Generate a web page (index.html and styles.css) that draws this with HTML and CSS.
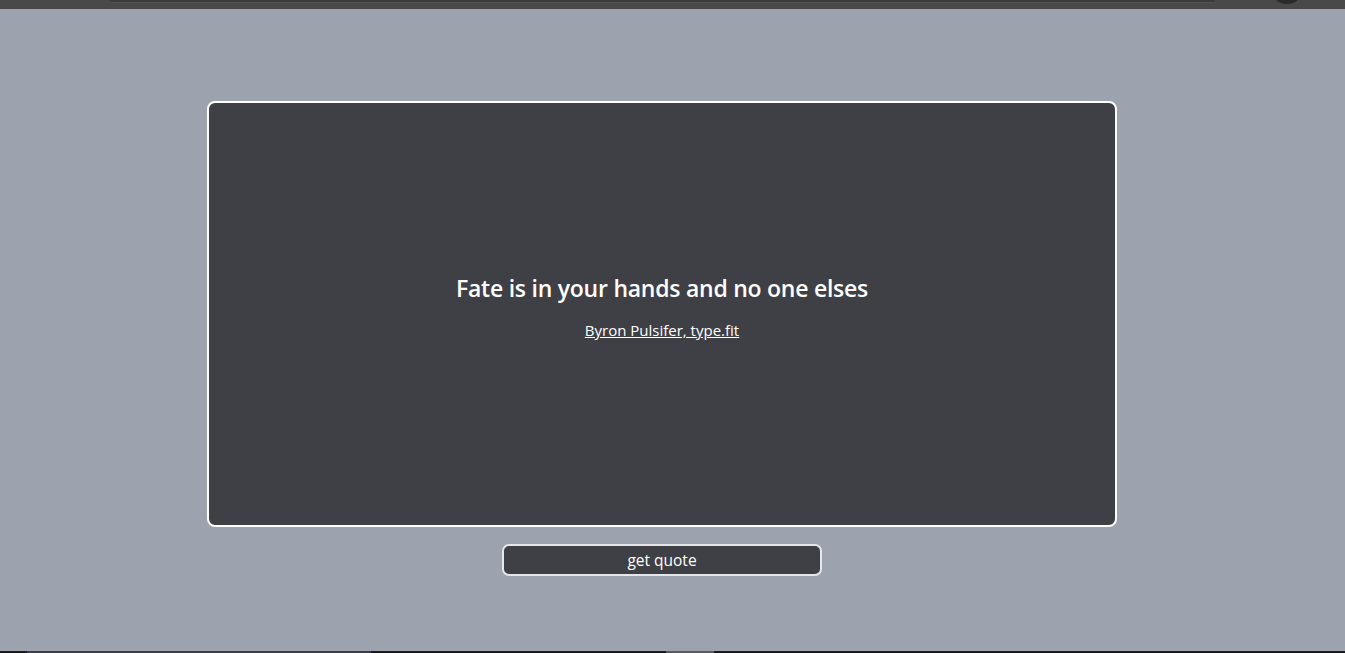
FILE: index.html
```html
<!DOCTYPE html>
<html>
<head>
<meta charset="utf-8">
<link rel="stylesheet" href="styles.css">
</head>
<body>
<div class="chrome-top">
  <div class="chrome-bar"></div>
  <div class="chrome-dot"></div>
</div>
<main class="page">
  <section class="card">
    <h1 class="quote">Fate is in your hands and no one elses</h1>
    <a class="author" href="#">Byron Pulsifer, type.fit</a>
  </section>
  <button class="get-btn">get quote</button>
</main>
<div class="chrome-bottom">
  <div class="seg seg-a"></div>
  <div class="seg seg-b"></div>
</div>
</body>
</html>
```

FILE: styles.css
```css
* { box-sizing: border-box; }
html, body { margin: 0; padding: 0; }
body {
  background: #9ca3af;
  height: 653px;
  overflow: hidden;
  font-family: "Open Sans", "Noto Sans", sans-serif;
  display: flex;
  flex-direction: column;
}
.chrome-top {
  height: 9px;
  background: #494949;
  position: relative;
  flex: none;
}
.chrome-bar {
  position: absolute;
  left: 107px;
  width: 1110px;
  top: -4px;
  height: 7px;
  border-radius: 4px;
  background: #3c3c3c;
  border: 1px solid #525252;
}
.chrome-dot {
  position: absolute;
  left: 1276px;
  top: -8px;
  width: 22px;
  height: 12px;
  border-radius: 50%;
  background: #2a2a2a;
}
.page {
  flex: 1;
  display: flex;
  flex-direction: column;
  align-items: center;
  padding-top: 92px;
  padding-right: 21px;
  gap: 17px;
}
.card {
  width: 910px;
  height: 426px;
  background: #3f3f46;
  border: 2px solid #ffffff;
  border-radius: 8px;
  display: flex;
  flex-direction: column;
  align-items: center;
  justify-content: center;
  color: #ffffff;
  padding-bottom: 16px;
}
.quote {
  margin: 0;
  font-size: 23px;
  font-weight: 600;
  line-height: 32px;
  letter-spacing: -0.25px;
}
.author {
  margin-top: 16px;
  color: #ffffff;
  font-size: 15px;
  line-height: 20px;
  text-decoration: underline;
}
.get-btn {
  width: 320px;
  height: 32px;
  background: #3f3f46;
  border: 2px solid #e5e7eb;
  border-radius: 7px;
  color: #ffffff;
  font-family: "Open Sans", "Noto Sans", sans-serif;
  font-size: 15.5px;
  padding: 0;
}
.chrome-bottom {
  height: 2px;
  background: #1b1b1b;
  position: relative;
  flex: none;
}
.seg {
  position: absolute;
  top: 0;
  height: 2px;
}
.seg-a { left: 27px; width: 344px; background: #3a3d45; }
.seg-b { left: 666px; width: 48px; background: #5a5a5a; }
```
